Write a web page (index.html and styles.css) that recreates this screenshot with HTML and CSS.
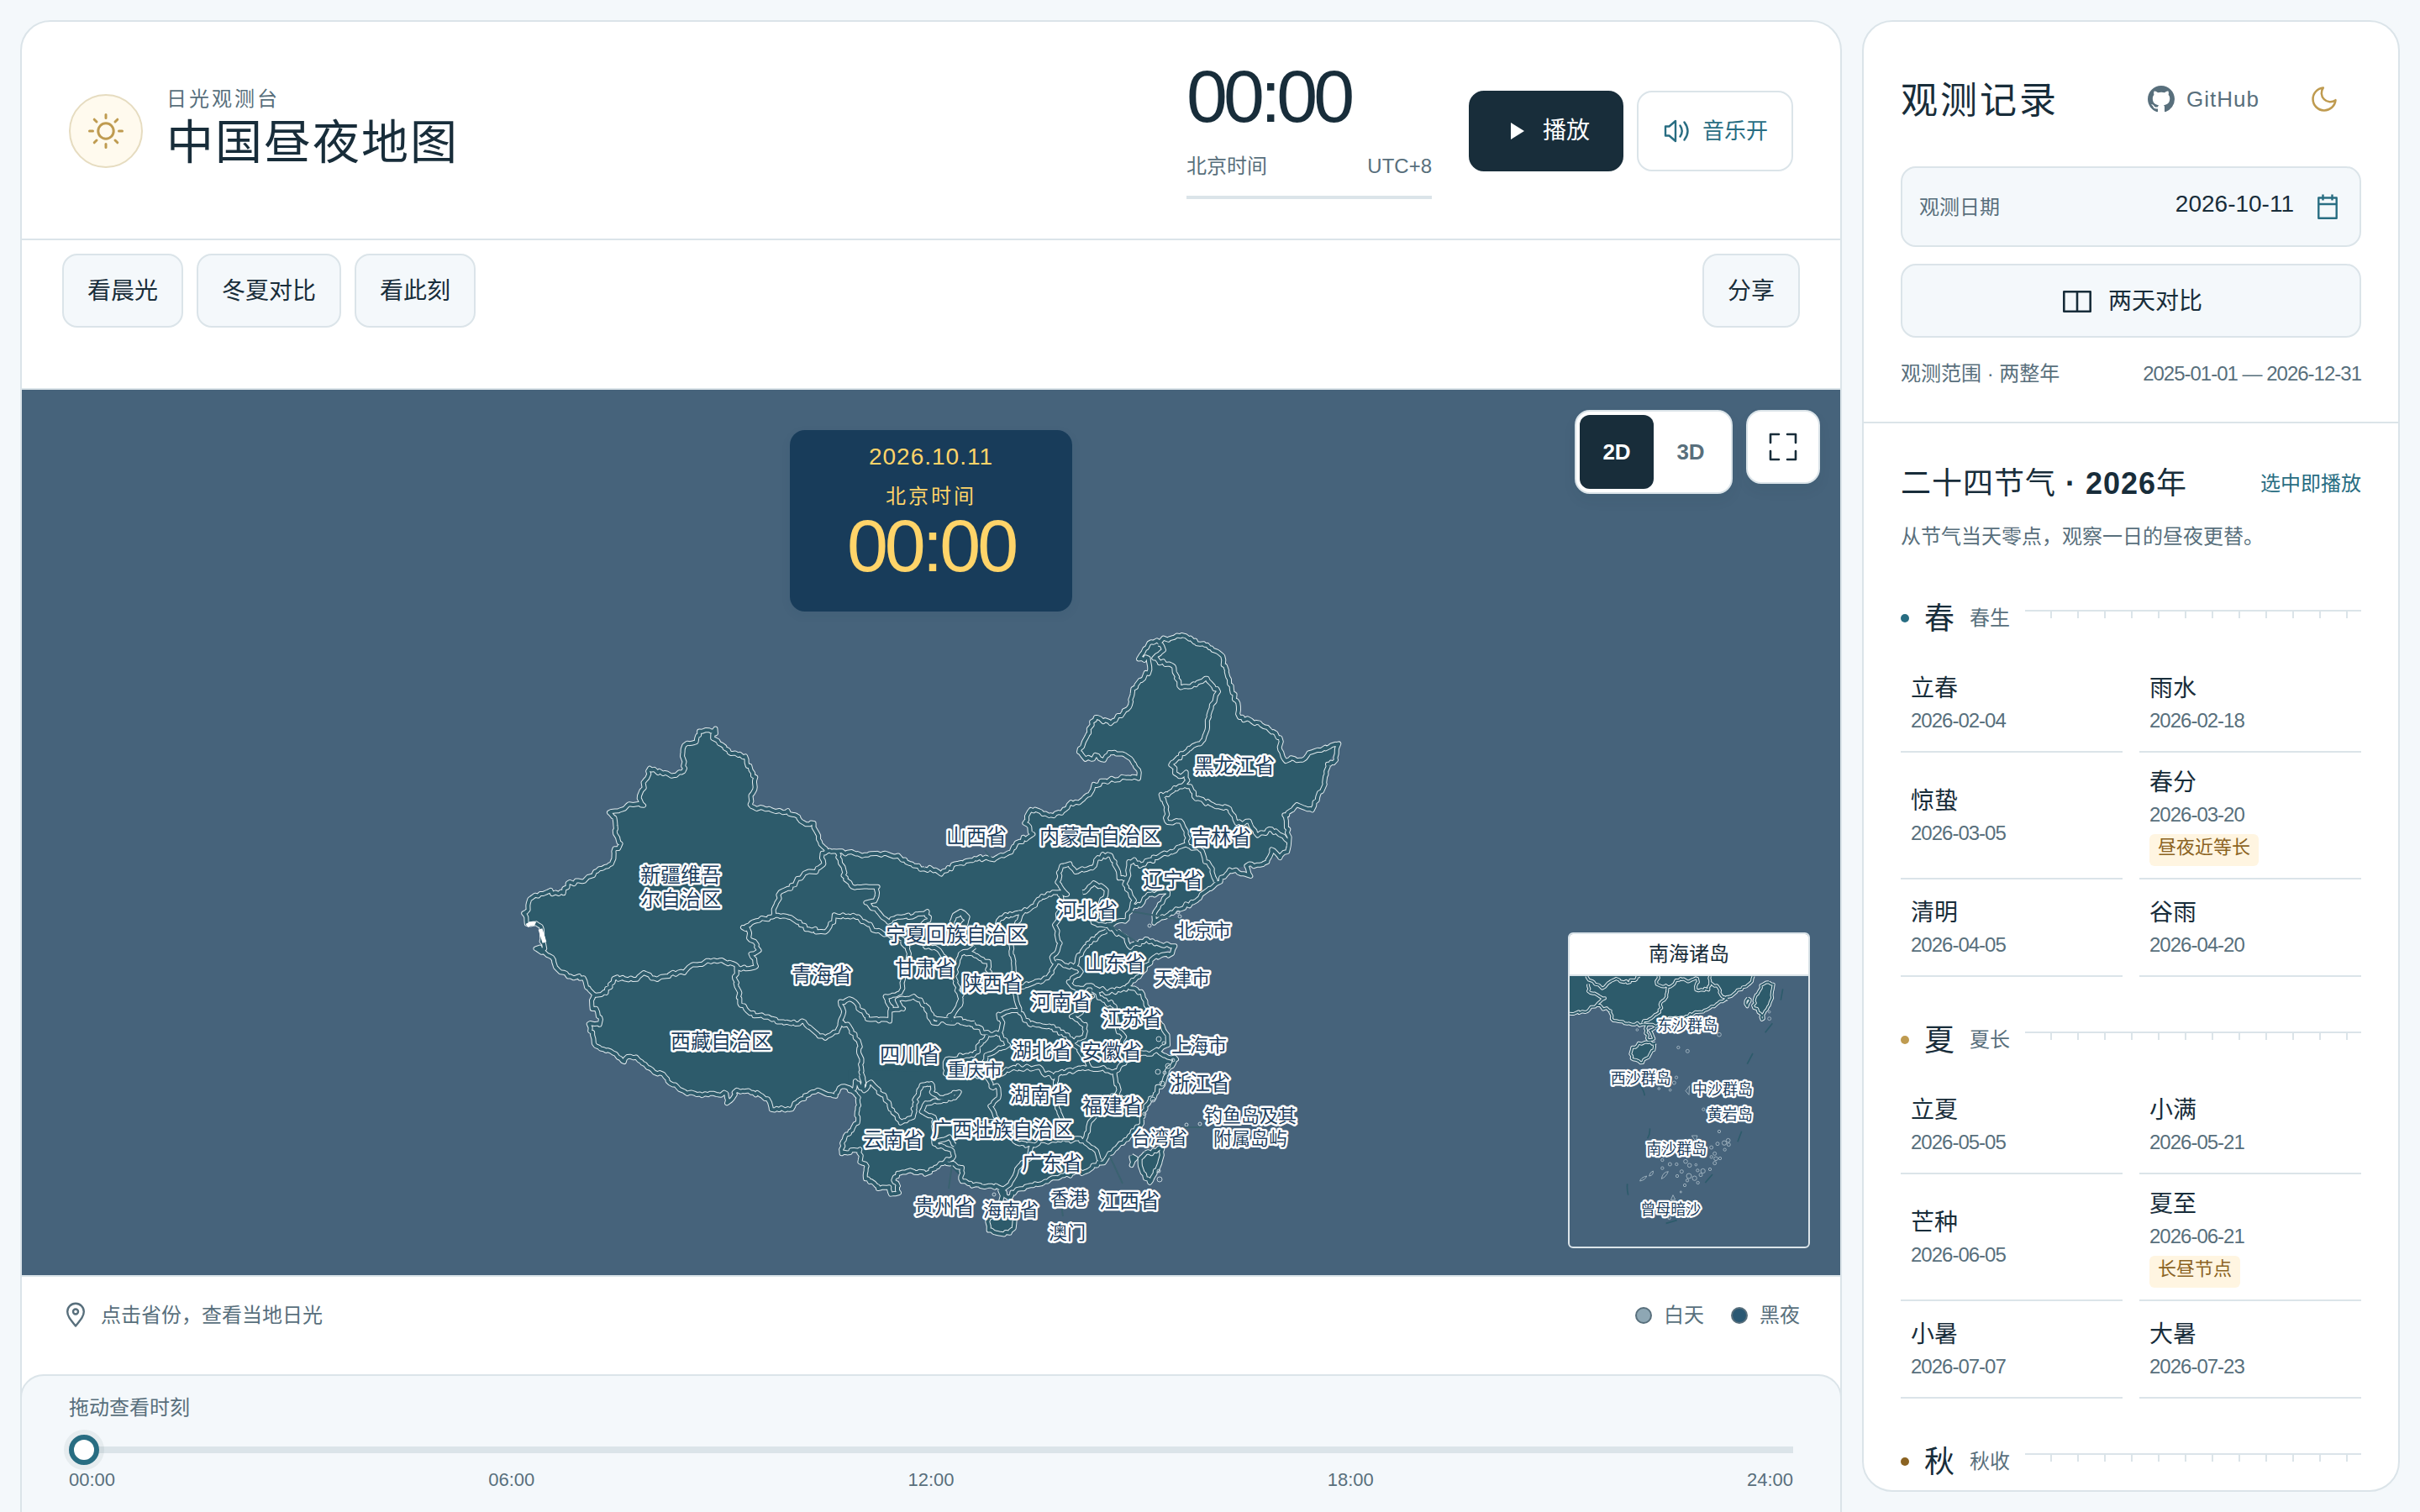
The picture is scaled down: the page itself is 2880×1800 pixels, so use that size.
FILE: index.html
```html
<!DOCTYPE html>
<html lang="zh-CN">
<head>
<meta charset="utf-8">
<meta name="viewport" content="width=device-width, initial-scale=1">
<title>中国昼夜地图</title>
<link rel="stylesheet" href="styles.css">
</head>
<body>
<div class="shell">
  <main class="board">
    <header class="masthead">
      <div class="brand">
        <span class="brand-mark">
          <svg width="44" height="44" viewBox="0 0 44 44" fill="none" stroke="currentColor" stroke-width="3" stroke-linecap="round"><circle cx="22" cy="22" r="9.2"/><path d="M22 2.5v4M22 37.500v4M2.500 22h4M37.500 22h4M8.200 8.200l2.800 2.800M33 33l2.800 2.800M35.800 8.200L33 11M11 33l-2.800 2.800"/></svg>
        </span>
        <div>
          <p class="eyebrow">日光观测台</p>
          <h1 class="title">中国昼夜地图</h1>
        </div>
      </div>
      <div class="clock">
        <div class="clock-time">00:00</div>
        <div class="clock-meta"><span>北京时间</span><span>UTC+8</span></div>
        <div class="clock-bar"></div>
      </div>
      <div class="actions">
        <button class="btn btn-play" type="button">
          <svg width="16" height="20" viewBox="0 0 16 20" fill="currentColor"><path d="M0 0l16 10L0 20z"/></svg>播放</button>
        <button class="btn btn-sound" type="button">
          <svg width="32" height="28" viewBox="0 0 32 28" fill="none" stroke="currentColor" stroke-width="2.400" stroke-linejoin="round" stroke-linecap="round"><path d="M2 8.500h4.500L14 2v24l-7.500-6.500H2zM19.500 7.500q4.500 6.500 0 13M24.500 3.500q8 10.500 0 21"/></svg>音乐开</button>
      </div>
    </header>

    <nav class="toolbar">
      <button class="chip" type="button">看晨光</button>
      <button class="chip" type="button">冬夏对比</button>
      <button class="chip" type="button">看此刻</button>
      <button class="chip chip-share" type="button">分享</button>
    </nav>

    <section class="stage">
      <svg class="map" viewBox="26 464 2164 1054">
        <defs>
          <g id="borders">
            <g transform="translate(600 740) scale(.35714 .4209)">
              <polyline points="1400,699 1340,680 1320,668 1270,655 1200,660 1108,650 1075,650 1055,630 1032,582 1032,570 1000,570 945,535 905,537 825,523 822,495 835,475 838,440 822,420 808,390 785,375 750,370 725,348 695,330 704,303 690,310 650,310 640,340 600,350 595,370 602,415 572,435 530,430 485,415 450,500 465,520 430,518 350,540 368,555 370,600 388,628 365,650 358,685 310,705 260,735 212,740 198,768 160,770 155,760 120,770 85,785 80,815 65,825 75,855 95,855 122,862 125,905 135,925 105,925 160,950 180,985 220,1003 265,1008 275,1035 300,1055 292,1085 320,1120 318,1140 282,1138 298,1180 305,1200 345,1212 400,1245 420,1230 440,1232 500,1275 530,1280 545,1300 610,1335 680,1338 740,1335 742,1362 760,1350 775,1325 830,1332 860,1342 885,1360 890,1380 950,1380 990,1350 1045,1325 1105,1342 1125,1315 1165,1325"/>
              <polyline points="300,1055 340,1050 365,1010 430,1012 465,993 510,1012 580,992 600,993 630,970 720,958 770,970 780,980 840,975 822,940 850,930 835,905 815,895 812,868 795,865 850,845 895,835 920,765 955,755 1000,712 1040,708 1065,685 1060,655 1075,650"/>
              <polyline points="1108,650 1135,710 1130,718 1160,750 1215,750 1245,750 1235,790 1205,795 1245,820 1280,850 1310,835 1360,835 1410,820 1415,845 1390,860 1340,880"/>
              <polyline points="1490,850 1500,830 1520,820 1540,840 1520,870"/>
              <polyline points="895,835 930,832 985,850 1005,870 1070,878 1098,850 1100,830 1180,835 1240,875 1310,890 1345,920 1348,960 1330,1010 1320,1050 1270,1060 1290,1090 1285,1130 1220,1125 1180,1095 1160,1070 1120,1075 1130,1110 1120,1135"/>
              <polyline points="1285,1100 1330,1095 1310,1070 1365,1060 1410,1090 1425,1120 1470,1130 1568,1135"/>
              <polyline points="1480,1120 1520,1085 1515,1050 1500,1000 1520,940 1568,920"/>
              <polyline points="1400,915 1450,930 1470,960 1500,1010"/>
              <polyline points="775,975 768,1010 785,1050 785,1080 820,1108 880,1118 920,1132 970,1138 1000,1132 1035,1160 1070,1178 1110,1160 1120,1130 1150,1145 1182,1190 1190,1260 1195,1320 1170,1300 1165,1325"/>
            </g>
            <g transform="translate(980 1280) scale(.33333)">
              <polyline points="90,45 125,80 122,170 95,200 70,235 65,280 130,265 130,310 155,325 150,370 180,385 195,405 235,400 240,425 270,420 262,385 250,375 265,350 310,340 370,350 435,310 465,290 460,270 395,245 395,150 350,130 365,100 470,80 485,60 420,80 390,65 385,30 350,35 330,80 320,150 275,170 220,80 170,25 145,55 135,0"/>
              <polyline points="435,310 495,330 490,370 530,395 600,395 640,405"/>
              <polyline points="395,245 450,220 470,250"/>
            </g>
            <g transform="translate(1100 740) scale(.33333 .48469)">
              <polyline points="0,607 40,610 60,620 110,595 180,582 235,583 300,568 340,540 388,522 358,495 380,462 410,465 450,475 490,470 515,450 560,440 590,425 605,400 660,390 720,383 765,385 765,365 740,340 700,325 660,322 642,340 620,330 575,338 552,320 570,295 612,235 665,250 725,215 735,205 745,165 805,118 800,90 765,92 810,50 860,42 930,35 985,55 1025,65 1058,80 1080,120 1100,175 1120,200 1125,235 1170,245 1225,260 1270,285 1270,315 1285,338 1350,340 1385,320 1480,300 1470,340 1440,350 1430,400 1405,430 1385,463 1330,450 1285,475 1300,510 1300,555 1270,580 1240,560 1225,590 1150,600 1165,625 1090,610 1040,645 1000,665 960,690 880,715 820,740 820,720 850,690 870,665 800,670 780,690 740,705 725,730 655,745 680,760 720,775 735,800 790,780 850,795 895,797 885,815 820,825 780,860 725,895 780,915 800,950 845,990 862,1010 870,1040 835,1055 870,1070 900,1075 875,1095 860,1120 825,1160 790,1190 770,1240 740,1260 690,1290 630,1330 580,1350 500,1360 440,1375 380,1385 330,1395 300,1415 270,1395"/>
              <polyline points="835,55 855,70 820,90 860,105 890,110 910,158 970,155 1010,140 1050,172 1020,220 1010,265 985,300 960,305 880,352 910,380 935,370 940,390 910,405 870,425 845,425 865,455 865,490 915,490 935,515 940,550 985,560 1000,580 1020,600 1040,640"/>
              <polyline points="910,405 950,405 970,435 1030,450 1090,460 1115,495 1160,490 1190,525 1240,510 1300,540"/>
              <polyline points="940,550 880,565 830,580 770,600 750,585 730,590 725,630 695,630 680,590 655,572 620,580 600,605 540,615 520,595 490,600 475,640 510,670 480,665 420,675 385,700 350,715 290,720 260,745"/>
              <polyline points="725,630 715,645 750,685 740,705"/>
              <polyline points="480,665 500,690 465,745 485,790 455,825 470,840 440,875 380,890 325,895"/>
              <polyline points="350,715 320,760 310,810 320,850 325,915 340,960 380,990 460,995 500,1015 530,1030 570,1070 590,1095"/>
              <polyline points="470,835 540,850 550,820 600,780 650,760"/>
              <polyline points="565,665 605,642 650,660 630,690 640,710 600,730 620,745 655,745"/>
              <polyline points="540,850 560,860 515,885 540,900 600,895 650,912 700,905 725,895"/>
              <polyline points="540,905 600,920 560,960 525,970 575,990 570,1020 530,1030"/>
              <polyline points="600,905 640,930 680,945 690,1000 715,1020 700,1045 780,1060 835,1055"/>
              <polyline points="335,955 265,965 280,985 270,1010 300,1040 220,1065 215,1095"/>
              <polyline points="0,940 30,985 100,975 160,985 215,1010 270,1015"/>
              <polyline points="225,1015 175,1065 80,1075 75,1110 130,1120 220,1110 245,1145 260,1140 265,1170 235,1190 265,1230 150,1235"/>
              <polyline points="130,810 180,820 230,835 230,870 150,870 120,945 90,975"/>
              <polyline points="95,750 105,725 130,712 155,725 140,745"/>
              <polyline points="215,1095 270,1110 320,1095 400,1095 460,1120 480,1110 540,1100 590,1095 680,1105 695,1150 680,1165 610,1180"/>
              <polyline points="680,1105 715,1085 780,1060"/>
              <polyline points="680,1165 740,1175 780,1210"/>
              <polyline points="610,1215 590,1230 570,1275"/>
              <polyline points="480,1110 465,1150 480,1200 500,1240 495,1275"/>
              <polyline points="265,1230 330,1280 385,1285 430,1275 500,1270 570,1275 615,1300 630,1325"/>
              <polyline points="385,1285 375,1320 330,1345 310,1375 280,1400"/>
              <polyline points="270,1395 280,1430 300,1440 310,1410"/>
              <polyline points="280,1445 320,1460 320,1490 285,1505 230,1495 230,1465 280,1445"/>
              <polyline points="790,1305 850,1295 835,1340 815,1365 805,1378 775,1345 770,1320 790,1305"/>
              <polyline points="740,1312 755,1318 740,1335 740,1312"/>
            </g>
          </g>
        </defs>
        <g class="land">
          <polygon transform="translate(600 740) scale(.35714 .4209)" points="1400,699 1340,680 1320,668 1270,655 1200,660 1108,650 1075,650 1055,630 1032,575 1000,570 945,535 905,537 825,523 822,495 838,440 808,390 785,375 750,370 695,330 690,310 650,310 640,340 600,350 595,370 602,415 572,435 530,430 485,415 450,500 465,520 430,518 350,540 368,555 370,600 388,628 365,650 358,685 310,705 260,735 212,740 198,768 120,770 85,785 65,825 75,855 122,862 135,925 160,950 180,985 265,1008 300,1055 292,1085 320,1120 318,1140 282,1138 298,1180 305,1200 400,1245 440,1232 500,1275 545,1300 610,1335 740,1335 775,1325 830,1332 885,1360 890,1380 950,1380 990,1350 1045,1325 1105,1342 1125,1315 1165,1325 1480,1400"/>
          <polygon transform="translate(980 1280) scale(.33333)" points="90,45 125,80 122,170 95,200 70,235 65,280 130,265 130,310 155,325 150,370 180,385 195,405 235,400 240,425 270,420 250,375 265,350 310,340 370,350 435,310 495,330 490,370 530,395 600,395 640,405 780,370 780,0 90,-20"/>
          <polygon transform="translate(1100 740) scale(.33333 .48469)" points="0,607 60,620 110,595 180,582 235,583 300,568 340,540 388,522 358,495 380,462 450,475 490,470 515,450 560,440 590,425 605,400 660,390 765,385 765,365 740,340 700,325 660,322 642,340 575,338 552,320 612,235 665,250 735,205 745,165 805,118 800,90 765,92 810,50 930,35 1025,65 1058,80 1080,120 1100,175 1125,235 1225,260 1270,285 1285,338 1350,340 1385,320 1480,300 1440,350 1430,400 1385,463 1330,450 1285,475 1300,555 1225,590 1150,600 1090,610 1040,645 960,690 820,740 820,720 870,665 800,670 740,705 725,730 655,745 680,760 735,800 790,780 895,797 820,825 780,860 725,895 780,915 800,950 845,990 870,1040 835,1055 900,1075 860,1120 825,1160 790,1190 770,1240 690,1290 630,1330 580,1350 440,1375 330,1395 270,1395 160,1385 90,1335 0,1330"/>
          <polygon transform="translate(1100 740) scale(.33333 .48469)" points="280,1445 320,1460 320,1490 285,1505 230,1495 230,1465"/>
          <polygon transform="translate(1100 740) scale(.33333 .48469)" points="790,1305 850,1295 835,1340 805,1378 775,1345 770,1320"/>
        </g>
        <use class="casing" href="#borders"/>
        <use class="seam" href="#borders"/>
        <path class="pamir" d="M627 1102q6-4 10-2M643 1106l5 16"/>
        <g class="islets">
          <circle cx="1362" cy="1326" r="2"/><circle cx="1372" cy="1309" r="3"/><circle cx="1379" cy="1394" r="2"/><circle cx="1380" cy="1404" r="3"/><circle cx="1412" cy="1339" r="2"/><circle cx="1428" cy="1338" r="2"/><circle cx="1390" cy="1269" r="3"/><circle cx="1392" cy="1282" r="3"/><circle cx="1383" cy="1290" r="3"/><circle cx="1396" cy="1262" r="2"/><circle cx="1386" cy="1277" r="2"/><circle cx="1378" cy="1276" r="3"/><circle cx="1379" cy="1237" r="3"/><circle cx="1385" cy="1242" r="2"/><circle cx="1402" cy="1086" r="2"/><circle cx="1368" cy="1102" r="2"/><circle cx="1183" cy="1422" r="2"/><circle cx="1404" cy="1091" r="2"/>
        </g>
        <path class="leaders" d="M1172 1012l8 10M1346 1085l60 10M1318 1099l40 26M1320 1375l16 34M1133 1387l-4 28M1260 1414l5 34M1410 1342h22"/>
        <g class="labels">
          <text x="810" y="1041">新疆维吾</text><text x="810" y="1070">尔自治区</text>
          <text x="858" y="1239">西藏自治区</text><text x="978" y="1160">青海省</text>
          <text x="1101" y="1152">甘肃省</text><text x="1138" y="1112">宁夏回族自治区</text>
          <text x="1083" y="1255">四川省</text><text x="1063" y="1356">云南省</text>
          <text x="1162" y="995">山西省</text><text x="1309" y="995">内蒙古自治区</text>
          <text x="1469" y="911">黑龙江省</text><text x="1453" y="996">吉林省</text>
          <text x="1396" y="1047">辽宁省</text><text x="1294" y="1083">河北省</text>
          <text x="1327" y="1146">山东省</text><text x="1181" y="1170">陕西省</text>
          <text x="1263" y="1192">河南省</text><text x="1347" y="1212">江苏省</text>
          <text x="1240" y="1250">湖北省</text><text x="1323" y="1251">安徽省</text>
          <text x="1238" y="1303">湖南省</text><text x="1324" y="1316">福建省</text>
          <text x="1428" y="1289">浙江省</text><text x="1193" y="1344">广西壮族自治区</text>
          <text x="1252" y="1384">广东省</text><text x="1124" y="1436">贵州省</text>
          <text x="1344" y="1429">江西省</text>
          <g class="minor">
            <text x="1432" y="1107">北京市</text><text x="1407" y="1164">天津市</text>
            <text x="1427" y="1244">上海市</text><text x="1160" y="1273">重庆市</text>
            <text x="1488" y="1328">钓鱼岛及其</text><text x="1488" y="1355">附属岛屿</text>
            <text x="1380" y="1354">台湾省</text><text x="1203" y="1440">海南省</text>
            <text x="1272" y="1426">香港</text><text x="1270" y="1467">澳门</text>
          </g>
        </g>
      </svg>

      <div class="readout">
        <div class="readout-date">2026.10.11</div>
        <div class="readout-zone">北京时间</div>
        <div class="readout-time">00:00</div>
      </div>

      <div class="stage-tools">
        <div class="segmented">
          <button class="seg seg-on" type="button">2D</button>
          <button class="seg" type="button">3D</button>
        </div>
        <button class="expand" type="button" aria-label="全屏">
          <svg width="34" height="34" viewBox="0 0 34 34" fill="none" stroke="currentColor" stroke-width="2.600" stroke-linecap="round" stroke-linejoin="round"><path d="M2 12V2h10M22 2h10v10M32 22v10H22M12 32H2V22"/></svg>
        </button>
      </div>

      <figure class="inset">
        <figcaption class="inset-title">南海诸岛</figcaption>
        <svg class="inset-map" viewBox="84 216 852 966">
          <defs>
            <g id="south">
              <polyline points="740,216 735,235 690,265 640,300 600,325 540,345 500,360 440,365 390,395 360,390 280,385 240,375 230,340 180,320 140,345 84,350"/>
              <polyline points="145,216 175,245 200,260 250,225 290,240 335,216"/>
              <polyline points="150,245 150,270 210,295 180,320"/>
              <polyline points="400,216 395,245 435,255 430,290 410,310 405,345 345,385"/>
              <polyline points="435,255 480,225 510,235 540,225 535,265 580,265 585,216"/>
              <polyline points="585,240 610,250 630,290 650,300"/>
              <polyline points="360,390 355,420 365,445 385,440 370,410 390,400"/>
              <polyline points="390,455 385,480 345,525 305,510 305,480 330,455 390,455"/>
              <polyline points="795,238 812,245 800,310 770,372 765,350 742,330 745,295 775,245 795,238"/>
              <polyline points="720,295 728,300 718,325 712,315 720,295"/>
            </g>
          </defs>
          <g class="land">
            <polygon points="84,216 740,216 735,235 690,265 640,300 600,325 540,345 500,360 440,365 390,395 360,390 280,385 240,375 230,340 180,320 140,345 84,350"/>
            <polygon points="390,455 385,480 345,525 305,510 305,480 330,455"/>
            <polygon points="795,238 812,245 800,310 770,372 765,350 742,330 745,295 775,245"/>
          </g>
          <use class="casing casing-fine" href="#south"/>
          <use class="seam seam-fine" href="#south"/>
          <path class="dashes" d="M845 262l-7 40M808 385l-26 33M738 492l-20 38M698 770l-14 38M594 924l-26 30M467 1088l-39 11M290 958q-2 20 3 40M370 760q2 20-8 36M335 605q14 18 17 38"/>
          <g class="islets">
            <circle cx="618" cy="425" r="7"/><circle cx="472" cy="471" r="5"/><circle cx="505" cy="484" r="6"/><circle cx="325" cy="408" r="4"/><circle cx="797" cy="344" r="4"/><circle cx="797" cy="368" r="6"/><circle cx="465" cy="578" r="5"/><circle cx="457" cy="597" r="6"/><circle cx="443" cy="623" r="4"/><circle cx="403" cy="618" r="4"/><path d="M512 608l-14 18 12 14z"/><circle cx="562" cy="692" r="5"/><circle cx="618" cy="771" r="5"/><path d="M520 786h20l-6 20zM335 948q2-12 24-18-4 14-24 18zM368 930q2-14 14-18 2 16-14 18zM412 940q4-24 24-26-8 20-24 26z"/><circle cx="650" cy="803" r="7"/><circle cx="636" cy="812" r="8"/><circle cx="652" cy="818" r="6"/><circle cx="612" cy="815" r="6"/><circle cx="590" cy="828" r="6"/><circle cx="638" cy="836" r="5"/><circle cx="602" cy="850" r="6"/><circle cx="590" cy="862" r="5"/><circle cx="606" cy="868" r="7"/><circle cx="621" cy="867" r="5"/><circle cx="602" cy="884" r="6"/><circle cx="585" cy="906" r="5"/><circle cx="560" cy="912" r="8"/><circle cx="541" cy="910" r="5"/><circle cx="552" cy="926" r="6"/><circle cx="535" cy="890" r="4"/><circle cx="512" cy="892" r="7"/><circle cx="498" cy="878" r="7"/><circle cx="466" cy="888" r="5"/><circle cx="442" cy="888" r="6"/><circle cx="415" cy="902" r="5"/><circle cx="415" cy="873" r="5"/><circle cx="484" cy="914" r="6"/><circle cx="468" cy="930" r="5"/><circle cx="510" cy="930" r="9"/><circle cx="530" cy="938" r="8"/><circle cx="542" cy="954" r="5"/><circle cx="504" cy="946" r="5"/><circle cx="495" cy="963" r="5"/><circle cx="481" cy="987" r="3"/><path d="M453 998l8 16-16 2z"/><circle cx="440" cy="1080" r="5"/>
          </g>
          <g class="inset-labels">
            <text x="505" y="394">东沙群岛</text><text x="338" y="582">西沙群岛</text><text x="630" y="622">中沙群岛</text><text x="656" y="710">黄岩岛</text><text x="466" y="835">南沙群岛</text><text x="445" y="1050">曾母暗沙</text>
          </g>
        </svg>
      </figure>
    </section>

    <div class="legend">
      <svg width="24" height="30" viewBox="0 0 24 30" fill="none" stroke="currentColor" stroke-width="2.400" stroke-linejoin="round"><path d="M12 28.500C5.500 20.500 2.200 16.500 2.200 11.500a9.800 9.800 0 0 1 19.600 0c0 5-3.300 9-9.800 17z"/><circle cx="12" cy="11.500" r="3"/></svg>
      <span class="legend-hint">点击省份，查看当地日光</span>
      <span class="legend-key"><i class="swatch swatch-day"></i>白天</span>
      <span class="legend-key"><i class="swatch swatch-night"></i>黑夜</span>
    </div>

    <section class="timeline">
      <label class="timeline-label" for="time">拖动查看时刻</label>
      <input class="slider" id="time" type="range" min="0" max="1440" value="0">
      <div class="scale"><span>00:00</span><span>06:00</span><span>12:00</span><span>18:00</span><span>24:00</span></div>
    </section>
  </main>

  <aside class="panel">
    <div class="panel-top">
      <div class="panel-head">
        <h2 class="panel-title">观测记录</h2>
        <a class="github" href="#github">
          <svg width="32" height="32" viewBox="0 0 16 16" fill="currentColor"><path d="M8 0C3.580 0 0 3.580 0 8c0 3.540 2.290 6.530 5.470 7.590.4.070.55-.17.55-.38 0-.19-.01-.82-.01-1.490-2.010.37-2.530-.49-2.690-.94-.09-.23-.48-.94-.82-1.130-.28-.15-.68-.52-.01-.53.63-.01 1.080.58 1.230.82.72 1.210 1.870.87 2.330.66.070-.52.28-.87.51-1.070-1.780-.2-3.640-.89-3.640-3.950 0-.87.31-1.590.82-2.150-.08-.2-.36-1.020.08-2.120 0 0 .67-.21 2.200.82.64-.18 1.320-.27 2-.27s1.360.09 2 .27c1.530-1.040 2.200-.82 2.200-.82.44 1.100.16 1.920.08 2.120.51.56.82 1.270.82 2.150 0 3.070-1.870 3.750-3.650 3.950.29.25.54.73.54 1.480 0 1.070-.01 1.930-.01 2.200 0 .21.15.46.55.38A8.010 8.010 0 0 0 16 8c0-4.420-3.580-8-8-8z"/></svg>GitHub</a>
        <button class="theme" type="button" aria-label="夜间模式">
          <svg width="36" height="36" viewBox="0 0 24 24" fill="none" stroke="currentColor" stroke-width="1.700" stroke-linejoin="round"><path d="M21 12.790A9 9 0 1 1 11.210 3 7 7 0 0 0 21 12.790z"/></svg>
        </button>
      </div>
      <div class="date-field">
        <label class="date-label" for="date">观测日期</label>
        <input class="date-input" id="date" type="text" value="2026-10-11">
        <svg width="24" height="30" viewBox="0 0 24 30" fill="none" stroke="currentColor" stroke-width="2.400" stroke-linejoin="round"><path d="M1.300 4.500h21.400v24.200H1.300zM1.300 12h21.400M6.500 .5v7M17.500 .5v7"/></svg>
      </div>
      <button class="compare" type="button">
        <svg width="34" height="26" viewBox="0 0 34 26" fill="none" stroke="currentColor" stroke-width="2.600" stroke-linejoin="round"><path d="M1.300 1.300h31.400v23.400H1.300zM17 1.300v23.400"/></svg>两天对比</button>
      <div class="range-row"><span>观测范围 · 两整年</span><span class="tight">2025-01-01 — 2026-12-31</span></div>
    </div>

    <section class="terms">
      <div class="terms-head">
        <h3 class="terms-title">二十四节气 <strong>· 2026</strong>年</h3>
        <span class="terms-note">选中即播放</span>
      </div>
      <p class="terms-desc">从节气当天零点，观察一日的昼夜更替。</p>

      <div class="season">
        <div class="season-head"><i class="dot dot-spring"></i><h4 class="season-name">春</h4><span class="season-sub">春生</span><i class="ruler"></i></div>
        <div class="term-grid">
          <button class="term" type="button"><span class="term-name">立春</span><span class="term-date">2026-02-04</span></button>
          <button class="term" type="button"><span class="term-name">雨水</span><span class="term-date">2026-02-18</span></button>
          <button class="term" type="button"><span class="term-name">惊蛰</span><span class="term-date">2026-03-05</span></button>
          <button class="term" type="button"><span class="term-name">春分</span><span class="term-date">2026-03-20</span><span class="tag">昼夜近等长</span></button>
          <button class="term" type="button"><span class="term-name">清明</span><span class="term-date">2026-04-05</span></button>
          <button class="term" type="button"><span class="term-name">谷雨</span><span class="term-date">2026-04-20</span></button>
        </div>
      </div>
      <div class="season">
        <div class="season-head"><i class="dot dot-summer"></i><h4 class="season-name">夏</h4><span class="season-sub">夏长</span><i class="ruler"></i></div>
        <div class="term-grid">
          <button class="term" type="button"><span class="term-name">立夏</span><span class="term-date">2026-05-05</span></button>
          <button class="term" type="button"><span class="term-name">小满</span><span class="term-date">2026-05-21</span></button>
          <button class="term" type="button"><span class="term-name">芒种</span><span class="term-date">2026-06-05</span></button>
          <button class="term" type="button"><span class="term-name">夏至</span><span class="term-date">2026-06-21</span><span class="tag">长昼节点</span></button>
          <button class="term" type="button"><span class="term-name">小暑</span><span class="term-date">2026-07-07</span></button>
          <button class="term" type="button"><span class="term-name">大暑</span><span class="term-date">2026-07-23</span></button>
        </div>
      </div>
      <div class="season">
        <div class="season-head"><i class="dot dot-autumn"></i><h4 class="season-name">秋</h4><span class="season-sub">秋收</span><i class="ruler"></i></div>
      </div>
    </section>
  </aside>
</div>
<script src="map.js"></script>
</body>
</html>
```

FILE: styles.css
```css
:root {
  --ink: #182d3a;
  --muted: #586f7c;
  --line: #dbe4e9;
  --wash: #f4f8fb;
  --teal: #286d82;
  --gold: #bf9b50;
  --night: #46637b;
  --land: #2d5b6b;
}

* { box-sizing: border-box; margin: 0; }

body {
  background: var(--wash);
  color: var(--ink);
  font-family: "Liberation Sans", "Noto Sans CJK SC", sans-serif;
  font-size: 24px;
  line-height: 36px;
  overflow: hidden;
}

button, input { font: inherit; color: inherit; }
button { cursor: pointer; padding: 0; }
svg { flex: none; display: block; }
h1, h2, h3, h4 { font-weight: 400; }

.shell {
  display: grid;
  grid-template-columns: minmax(0, 1fr) 640px;
  gap: 24px;
  height: 100vh;
  padding: 24px;
}

/* main board */
.board {
  align-self: start;
  min-height: 100vh;
  background: #fff;
  border: 2px solid var(--line);
  border-radius: 36px;
}

.masthead {
  display: flex;
  align-items: center;
  min-height: 260px;
  padding: 2px 56px 0;
  border-bottom: 2px solid var(--line);
}
.brand { display: flex; align-items: center; gap: 28px; margin-right: auto; }
.brand-mark {
  display: grid;
  place-items: center;
  width: 88px;
  height: 88px;
  border: 2px solid #e6dcc0;
  border-radius: 50%;
  background: #fffaee;
  color: var(--gold);
}
.eyebrow { color: var(--muted); line-height: 28px; letter-spacing: 3px; }
.title { font-size: 56px; line-height: 76px; letter-spacing: 2px; }

.clock { width: 292px; margin-right: 44px; }
.clock-time { font-size: 88px; line-height: 80px; letter-spacing: -5px; }
.clock-meta {
  display: flex;
  justify-content: space-between;
  margin-top: 26px;
  line-height: 34px;
  color: var(--muted);
}
.clock-bar { height: 4px; margin-top: 18px; background: var(--line); }

.actions { display: flex; gap: 16px; }
.btn {
  display: flex;
  align-items: center;
  justify-content: center;
  width: 184px;
  height: 96px;
  border: 2px solid var(--line);
  border-radius: 18px;
}
.btn-play { gap: 22px; padding-left: 10px; background: var(--ink); border-color: var(--ink); color: #fff; font-size: 28px; }
.btn-sound { gap: 14px; width: 186px; padding-left: 2px; background: #fff; color: var(--teal); font-size: 26px; }

.toolbar {
  display: flex;
  align-items: flex-start;
  gap: 16px;
  height: 178px;
  padding: 16px 48px;
  border-bottom: 2px solid var(--line);
}
.chip {
  height: 88px;
  padding: 2px 28px 0;
  border: 2px solid var(--line);
  border-radius: 18px;
  background: var(--wash);
  font-size: 28px;
}
.chip-share { margin-left: auto; }

/* map */
.stage { position: relative; aspect-ratio: 1082 / 527; background: var(--night); }
.map { width: 100%; height: 100%; }
.land { fill: var(--land); }
polyline { fill: none; vector-effect: non-scaling-stroke; stroke-linejoin: round; }
.casing { stroke: #e2eaed; stroke-width: 6; }
.seam { stroke: var(--land); stroke-width: 4; }
.casing-fine { stroke-width: 4; }
.seam-fine { stroke-width: 2; }
.pamir { stroke: #fff; stroke-width: 5; fill: none; }
.islets { fill: none; stroke: #c3d2d9; stroke-width: 1; }
.inset .islets { stroke-width: 2; }
.leaders { stroke: #3a6270; stroke-width: 2; fill: none; }
.dashes { stroke: var(--land); stroke-width: 5; fill: none; }
.labels, .inset-labels {
  fill: #1d4060;
  stroke: #fff;
  stroke-width: 5;
  stroke-linejoin: round;
  paint-order: stroke;
  text-anchor: middle;
  dominant-baseline: central;
  font-size: 24px;
}
.minor { font-size: 22px; }
.inset-labels { font-size: 54px; stroke-width: 14; }

.readout {
  position: absolute;
  top: 48px;
  left: 50%;
  width: 336px;
  height: 216px;
  margin-left: -168px;
  padding-top: 14px;
  border-radius: 18px;
  background: #183c5a;
  box-shadow: 0 4px 12px rgba(24, 60, 90, .08);
  color: #ffd469;
  text-align: center;
}
.readout-date { font-size: 28px; letter-spacing: 1px; }
.readout-zone { margin-top: 11px; letter-spacing: 3px; }
.readout-time { margin-top: -3px; font-size: 88px; line-height: 88px; letter-spacing: -4px; }

.stage-tools { position: absolute; top: 24px; right: 24px; display: flex; align-items: flex-start; gap: 16px; }
.segmented {
  display: flex;
  padding: 4px;
  border: 2px solid var(--line);
  border-radius: 18px;
  background: #fff;
  box-shadow: 0 8px 16px rgba(24, 45, 58, .06);
}
.seg { width: 88px; height: 88px; border: 0; border-radius: 12px; background: none; color: var(--muted); font-size: 26px; font-weight: 700; }
.seg-on { background: var(--ink); color: #fff; }
.expand {
  display: grid;
  place-items: center;
  width: 88px;
  height: 88px;
  border: 2px solid var(--line);
  border-radius: 18px;
  background: #fff;
  box-shadow: 0 8px 16px rgba(24, 45, 58, .06);
}

.inset {
  position: absolute;
  right: 36px;
  bottom: 32px;
  width: 288px;
  border: 2px solid var(--line);
  border-radius: 6px;
  overflow: hidden;
  background: var(--night);
}
.inset-title { height: 50px; border-bottom: 2px solid var(--line); background: #fff; line-height: 48px; text-align: center; }
.inset-map { width: 100%; }

.legend {
  display: flex;
  align-items: flex-start;
  gap: 18px;
  height: 118px;
  padding: 28px 48px;
  border-top: 2px solid var(--line);
  color: var(--muted);
}
.legend svg { margin: 2px 0 0 4px; }
.legend-hint { margin-right: auto; }
.legend-key { display: flex; align-items: center; gap: 14px; margin-left: 14px; }
.swatch { width: 20px; height: 20px; border-radius: 50%; border: 2px solid var(--muted); }
.swatch-day { background: #8ea7b4; }
.swatch-night { background: #2a5873; }

.timeline {
  margin: 0 -2px;
  padding: 20px 56px 48px;
  border: 2px solid var(--line);
  border-radius: 28px 28px 0 0;
  background: var(--wash);
  color: var(--muted);
}
.timeline-label { display: block; }
.slider { display: block; appearance: none; width: 100%; height: 36px; margin: 14px 0 0; background: none; }
.slider::-webkit-slider-runnable-track { height: 8px; background: var(--line); }
.slider::-webkit-slider-thumb {
  appearance: none;
  width: 36px;
  height: 36px;
  margin-top: -14px;
  border: 6px solid var(--teal);
  border-radius: 50%;
  background: #fff;
  box-shadow: 0 0 0 6px rgba(24, 45, 58, .06);
}
.scale { display: flex; justify-content: space-between; font-size: 22px; }

/* side panel */
.panel {
  height: calc(100vh - 48px);
  overflow: hidden;
  border: 2px solid var(--line);
  border-radius: 36px;
  background: #fff;
}
.panel-top { padding: 48px 44px 39px; border-bottom: 2px solid var(--line); }
.panel-head { display: flex; align-items: center; height: 88px; }
.panel-title { margin-right: auto; padding-top: 4px; font-size: 44px; letter-spacing: 3px; }
.github { display: flex; align-items: center; gap: 14px; margin-right: 33px; color: var(--muted); font-size: 26px; letter-spacing: 1px; text-decoration: none; }
.theme { display: grid; place-items: center; width: 88px; height: 88px; border: 0; background: none; color: var(--gold); }

.date-field {
  display: flex;
  align-items: center;
  height: 96px;
  margin-top: 36px;
  padding: 0 26px 0 20px;
  border: 2px solid var(--line);
  border-radius: 18px;
  background: var(--wash);
  color: var(--teal);
}
.date-label { padding-top: 2px; color: var(--muted); }
.date-input { flex: 1; min-width: 0; margin-right: 28px; padding: 0 0 6px; border: 0; outline: 0; background: none; color: var(--ink); font-size: 28px; text-align: right; }

.compare {
  display: flex;
  align-items: center;
  justify-content: center;
  gap: 20px;
  width: 100%;
  height: 88px;
  margin-top: 20px;
  padding: 2px 0 0 4px;
  border: 2px solid var(--line);
  border-radius: 18px;
  background: var(--wash);
  font-size: 28px;
}
.range-row { display: flex; justify-content: space-between; margin-top: 25px; color: var(--muted); }
.tight, .term-date { letter-spacing: -1px; }

.terms { padding: 50px 44px 0; }
.terms-head { display: flex; align-items: center; justify-content: space-between; height: 44px; }
.terms-title { font-size: 36px; letter-spacing: 1px; }
.terms-note { color: var(--teal); }
.terms-desc { margin-top: 23px; color: var(--muted); }

.season { margin-top: 52px; }
.terms-desc + .season { margin-top: 56px; }
.season-head { display: flex; align-items: center; height: 44px; margin-bottom: 23px; padding-top: 2px; }
.dot { width: 10px; height: 10px; border-radius: 50%; }
.dot-spring { background: var(--teal); }
.dot-summer { background: var(--gold); }
.dot-autumn { background: #8b6322; }
.season-name { margin: 0 18px; padding-top: 2px; font-size: 36px; }
.season-sub { color: var(--muted); }
.ruler {
  flex: 1;
  height: 10px;
  margin: 0 0 10px 18px;
  border-top: 2px solid var(--line);
  background: repeating-linear-gradient(90deg, transparent 0 30px, var(--line) 30px 32px);
}

.term-grid { display: grid; grid-template-columns: 1fr 1fr; column-gap: 20px; }
.term {
  display: flex;
  flex-direction: column;
  align-items: flex-start;
  justify-content: center;
  min-height: 116px;
  padding: 16px 12px 14px;
  border: 0;
  border-bottom: 2px solid var(--line);
  background: none;
  text-align: left;
}
.term-name { font-size: 28px; line-height: 40px; }
.term-date { color: var(--muted); }
.tag { height: 38px; margin-top: 5px; padding: 0 10px; border-radius: 6px; background: #fff5e1; color: #8b6322; font-size: 22px; line-height: 32px; }
```

FILE: map.js
```js
// Adds fine coastline detail to the hand-plotted province borders.
let seed = 7;
const random = () => {
  seed = (seed * 16807) % 2147483647;
  return seed / 2147483647 - 0.5;
};

document.querySelectorAll("polyline").forEach((line) => {
  const pts = line.getAttribute("points").trim().split(/\s+/).map((p) => p.split(",").map(Number));
  const out = [pts[0]];
  for (let i = 1; i < pts.length; i++) {
    const [x0, y0] = pts[i - 1];
    const [x1, y1] = pts[i];
    const steps = Math.max(1, Math.round(Math.hypot(x1 - x0, y1 - y0) / 9));
    for (let s = 1; s < steps; s++) {
      const t = s / steps;
      out.push([x0 + (x1 - x0) * t + random() * 9, y0 + (y1 - y0) * t + random() * 9]);
    }
    out.push([x1, y1]);
  }
  line.setAttribute("points", out.map(([x, y]) => x.toFixed(1) + "," + y.toFixed(1)).join(" "));
});
```
